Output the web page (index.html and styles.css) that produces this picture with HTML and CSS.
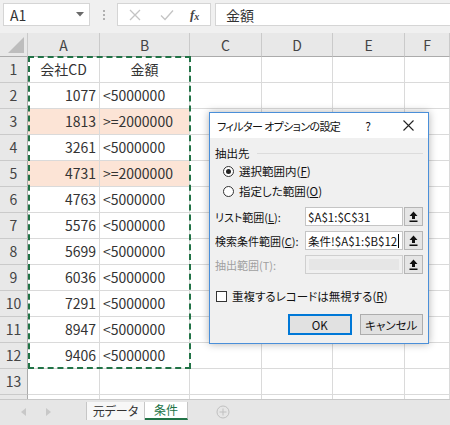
FILE: index.html
```html
<!DOCTYPE html>
<html lang="ja">
<head>
<meta charset="utf-8">
<link rel="stylesheet" href="styles.css">
</head>
<body>
<div class="app">
  <div class="fbar">
    <div class="namebox"><span>A1</span><svg class="caret" width="8" height="5" viewBox="0 0 8 5"><polygon points="0,0 8,0 4,4.5" fill="#6a6a6a"/></svg></div>
    <div class="dots"><span></span><span></span><span></span></div>
    <div class="fbtns">
      <svg class="fbi" width="12" height="12" viewBox="0 0 12 12"><path d="M1 1 L11 11 M11 1 L1 11" stroke="#c4c4c4" stroke-width="1.3" fill="none"/></svg>
      <svg class="fbi" width="14" height="12" viewBox="0 0 14 12"><path d="M1 6.5 L5 10.5 L13 1.5" stroke="#c4c4c4" stroke-width="1.3" fill="none"/></svg>
      <span class="fx">f<sub>x</sub></span>
    </div>
    <div class="formula">金額</div>
  </div>

  <div class="sheet">
    <div class="c hd corner"><svg width="16" height="16" viewBox="0 0 16 16"><polygon points="16,0 16,16 0,16" fill="#bdbdbd"/></svg></div>
    <div class="c hd">A</div><div class="c hd">B</div><div class="c hd">C</div><div class="c hd">D</div><div class="c hd">E</div><div class="c hd">F</div>

    <div class="c rh">1</div><div class="c ctr">会社CD</div><div class="c ctr">金額</div><div class="c"></div><div class="c"></div><div class="c"></div><div class="c"></div>
    <div class="c rh">2</div><div class="c num">1077</div><div class="c">&lt;5000000</div><div class="c"></div><div class="c"></div><div class="c"></div><div class="c"></div>
    <div class="c rh">3</div><div class="c num pk">1813</div><div class="c pk">&gt;=2000000</div><div class="c"></div><div class="c"></div><div class="c"></div><div class="c"></div>
    <div class="c rh">4</div><div class="c num">3261</div><div class="c">&lt;5000000</div><div class="c"></div><div class="c"></div><div class="c"></div><div class="c"></div>
    <div class="c rh">5</div><div class="c num pk">4731</div><div class="c pk">&gt;=2000000</div><div class="c"></div><div class="c"></div><div class="c"></div><div class="c"></div>
    <div class="c rh">6</div><div class="c num">4763</div><div class="c">&lt;5000000</div><div class="c"></div><div class="c"></div><div class="c"></div><div class="c"></div>
    <div class="c rh">7</div><div class="c num">5576</div><div class="c">&lt;5000000</div><div class="c"></div><div class="c"></div><div class="c"></div><div class="c"></div>
    <div class="c rh">8</div><div class="c num">5699</div><div class="c">&lt;5000000</div><div class="c"></div><div class="c"></div><div class="c"></div><div class="c"></div>
    <div class="c rh">9</div><div class="c num">6036</div><div class="c">&lt;5000000</div><div class="c"></div><div class="c"></div><div class="c"></div><div class="c"></div>
    <div class="c rh">10</div><div class="c num">7291</div><div class="c">&lt;5000000</div><div class="c"></div><div class="c"></div><div class="c"></div><div class="c"></div>
    <div class="c rh">11</div><div class="c num">8947</div><div class="c">&lt;5000000</div><div class="c"></div><div class="c"></div><div class="c"></div><div class="c"></div>
    <div class="c rh">12</div><div class="c num">9406</div><div class="c">&lt;5000000</div><div class="c"></div><div class="c"></div><div class="c"></div><div class="c"></div>
    <div class="c rh">13</div><div class="c"></div><div class="c"></div><div class="c"></div><div class="c"></div><div class="c"></div><div class="c"></div>
    <div class="c rh rh14"></div><div class="c"></div><div class="c"></div><div class="c"></div><div class="c"></div><div class="c"></div><div class="c"></div>

    <div class="ants"></div>
  </div>

  <div class="tabs">
    <div class="tnav">
      <svg width="6" height="8" viewBox="0 0 6 8"><polygon points="5,0 5,8 0,4" fill="#c8c8c8"/></svg>
      <svg width="6" height="8" viewBox="0 0 6 8"><polygon points="0,0 0,8 5,4" fill="#c8c8c8"/></svg>
    </div>
    <div class="tab">元データ</div>
    <div class="tab active">条件</div>
    <div class="tplus"><svg width="14" height="14" viewBox="0 0 14 14"><circle cx="7" cy="7" r="6" fill="none" stroke="#c0c0c0" stroke-width="1"/><path d="M7 3.5 V10.5 M3.5 7 H10.5" stroke="#c0c0c0" stroke-width="1"/></svg></div>
  </div>

  <div class="dialog">
    <div class="dtitle">
      <span class="dtext">フィルター オプションの設定</span>
      <span class="dq">?</span>
      <svg class="dx" width="11" height="11" viewBox="0 0 11 11"><path d="M0.5 0.5 L10.5 10.5 M10.5 0.5 L0.5 10.5" stroke="#222" stroke-width="1.1" fill="none"/></svg>
    </div>
    <div class="dbody">
      <div class="legend"><span>抽出先</span><i></i></div>
      <div class="radio"><span class="rb on"></span><span>選択範囲内(<u>F</u>)</span></div>
      <div class="radio"><span class="rb"></span><span>指定した範囲(<u>O</u>)</span></div>
      <div class="frow first"><span class="flabel">リスト範囲(<u>L</u>):</span><span class="inp">$A$1:$C$31</span><span class="pick"><svg width="9" height="11" viewBox="0 0 9 11"><path d="M4.5 0.5 L8.5 5 H6 V8 H3 V5 H0.5 Z" fill="#111"/><rect x="0.5" y="9.5" width="8" height="1.5" fill="#111"/></svg></span></div>
      <div class="frow"><span class="flabel">検索条件範囲(<u>C</u>):</span><span class="inp">条件!$A$1:$B$12<b class="cur"></b></span><span class="pick"><svg width="9" height="11" viewBox="0 0 9 11"><path d="M4.5 0.5 L8.5 5 H6 V8 H3 V5 H0.5 Z" fill="#111"/><rect x="0.5" y="9.5" width="8" height="1.5" fill="#111"/></svg></span></div>
      <div class="frow dis"><span class="flabel">抽出範囲(T):</span><span class="inp off"><i></i></span><span class="pick"><svg width="9" height="11" viewBox="0 0 9 11"><path d="M4.5 0.5 L8.5 5 H6 V8 H3 V5 H0.5 Z" fill="#111"/><rect x="0.5" y="9.5" width="8" height="1.5" fill="#111"/></svg></span></div>
      <div class="check"><span class="cb"></span><span>重複するレコードは無視する(<u>R</u>)</span></div>
      <div class="btns"><span class="btn ok">OK</span><span class="btn">キャンセル</span></div>
    </div>
  </div>
</div>
</body>
</html>
```

FILE: styles.css
```css
* { box-sizing: border-box; }
html, body { margin: 0; padding: 0; }
body { width: 450px; height: 425px; overflow: hidden; font-family: "Noto Sans CJK JP", "Noto Sans", sans-serif; }

.app { position: relative; width: 450px; height: 425px; background: #fff; overflow: hidden; }

/* formula bar */
.fbar { height: 33px; background: #f0f0f0; display: flex; align-items: flex-start; padding-top: 3px; }
.namebox { margin-left: 3px; width: 87px; height: 23px; background: #fff; border: 1px solid #d5d5d5; display: flex; align-items: center; justify-content: space-between; padding: 0 5px 0 6px; font-size: 14px; color: #333; }
.dots { width: 27px; height: 23px; display: flex; flex-direction: column; align-items: center; justify-content: center; gap: 2px; }
.dots span { width: 2px; height: 2px; background: #b0b0b0; }
.fbtns { width: 94px; height: 23px; background: #fff; border: 1px solid #d5d5d5; display: flex; align-items: center; padding-left: 11px; }
.fbi:nth-child(1) { margin-right: 19px; }
.fbi:nth-child(2) { margin-right: 16px; }
.fx { font-family: "Liberation Serif", serif; font-style: italic; font-weight: bold; font-size: 13px; color: #444; }
.fx sub { font-size: 10px; vertical-align: -1px; }
.formula { margin-left: 4px; flex: 1; height: 23px; background: #fff; border: 1px solid #d5d5d5; border-right: none; font-size: 14px; color: #333; display: flex; align-items: center; padding-left: 10px; }

/* sheet */
.sheet { position: relative; display: grid; grid-template-columns: 28px 72px 90px 72px 71px 72px 45px; grid-template-rows: 24px repeat(14, 26px); height: 366px; overflow: hidden; }
.c { border-right: 1px solid #dadada; border-bottom: 1px solid #dadada; font-size: 14px; line-height: 25px; padding: 0 3px; white-space: nowrap; color: #333; overflow: hidden; }
.hd { background: #e8e8e8; text-align: center; border-right-color: #cacaca; border-bottom-color: #ababab; color: #444; line-height: 24px; font-size: 14px; }
.corner { display: flex; align-items: flex-end; justify-content: flex-end; padding: 0 3px 3px 0; }
.rh { background: #e8e8e8; text-align: center; border-right-color: #ababab; border-bottom-color: #cacaca; color: #444; padding: 0; }
.num { text-align: right; }
.ctr { text-align: center; }
.pk { background: #fce4d6; }
.ants { position: absolute; left: 28px; top: 23px; width: 163px; height: 313px; border: 2px dashed #217346; }

/* sheet tabs */
.tabs { height: 26px; background: #e6e6e6; border-top: 1px solid #c8c8c8; display: flex; align-items: flex-start; }
.tnav { width: 86px; height: 18px; display: flex; align-items: center; gap: 19px; padding-left: 21px; margin-top: 3px; }
.tab { height: 18px; margin-top: 2px; font-size: 12px; font-feature-settings: "palt"; color: #333; background: #f7f7f7; border-left: 1px solid #c6c6c6; border-right: 1px solid #c6c6c6; display: flex; align-items: center; justify-content: center; width: 59px; line-height: 1; white-space: nowrap; }
.tab.active { width: 43px; background: #fff; color: #217346; border-left: none; border-bottom: 2px solid #217346; }
.tplus { margin-left: 28px; margin-top: 3px; height: 18px; display: flex; align-items: center; }

/* dialog */
.dialog { position: absolute; left: 209px; top: 112px; width: 220px; height: 232px; background: #f0f0f0; border: 1px solid #4a8fd9; box-shadow: 0 0 8px rgba(0,0,0,0.3); font-size: 11px; font-feature-settings: "palt"; color: #111; white-space: nowrap; }
.dtitle { height: 25px; background: #fff; display: flex; align-items: center; padding-left: 7px; }
.dtext { flex: 1; font-size: 11px; letter-spacing: -0.6px; }
.dq { font-size: 12px; margin-right: 32px; }
.dx { margin-right: 14px; }
.dbody { padding: 0 5px; display: flex; flex-direction: column; }
.legend { height: 16px; margin-top: 7px; display: flex; align-items: center; gap: 7px; font-size: 11.5px; }
.legend i { flex: 1; height: 1px; background: #dcdcdc; }
.radio { height: 20px; display: flex; align-items: center; padding-left: 8px; gap: 5px; font-size: 11.5px; }
.rb { width: 11px; height: 11px; border-radius: 50%; border: 1px solid #333; background: #fff; display: flex; align-items: center; justify-content: center; }
.rb.on::after { content: ""; width: 5px; height: 5px; border-radius: 50%; background: #222; }
.frow { height: 19px; margin-top: 5px; display: flex; align-items: stretch; }
.frow.first { margin-top: 6px; }
.flabel { width: 91px; display: flex; align-items: center; }
.inp { width: 99px; background: #fff; border: 1px solid #c5c5c5; display: flex; align-items: center; padding-left: 2px; font-size: 11.5px; overflow: hidden; }
.cur { display: inline-block; width: 1px; height: 14px; background: #000; margin-left: 1px; }
.pick { width: 19px; margin-left: 1px; background: #e5e5e5; border: 1px solid #b5b5b5; display: flex; align-items: center; justify-content: center; }
.dis .flabel { color: #a0a0a0; }
.inp.off { background: #f0f0f0; border-color: #cfcfcf; padding: 3px; }
.inp.off i { flex: 1; align-self: stretch; background: #e6e6e6; }
.check { height: 14px; margin-top: 15px; display: flex; align-items: center; gap: 5px; padding-left: 1px; font-size: 11.5px; }
.cb { width: 11px; height: 11px; border: 1px solid #333; background: #fff; }
.btns { margin-top: 11px; display: flex; gap: 8px; padding-left: 73px; }
.btn { width: 64px; height: 21px; background: #e1e1e1; border: 1px solid #adadad; display: flex; align-items: center; justify-content: center; font-size: 11.5px; }
.btn.ok { border: 2px solid #0078d7; }
```
